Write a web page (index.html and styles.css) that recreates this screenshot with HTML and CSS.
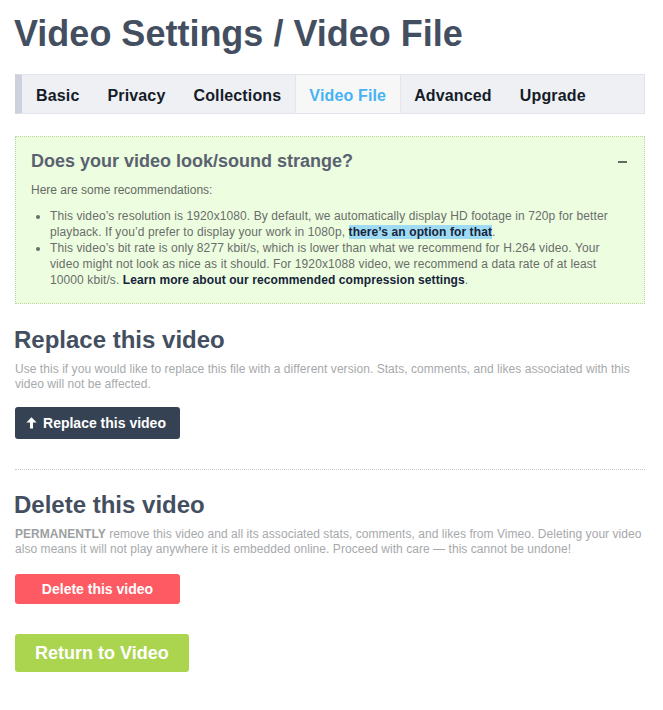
FILE: index.html
```html
<!DOCTYPE html>
<html>
<head>
<meta charset="utf-8">
<link rel="stylesheet" href="styles.css">
</head>
<body>
<div class="page">
  <h1 class="title">Video Settings / Video File</h1>
  <nav class="tabs">
    <a class="tab">Basic</a>
    <a class="tab">Privacy</a>
    <a class="tab">Collections</a>
    <a class="tab active">Video File</a>
    <a class="tab">Advanced</a>
    <a class="tab">Upgrade</a>
  </nav>

  <section class="notice">
    <div class="notice-head">
      <h2 class="notice-title">Does your video look/sound strange?</h2>
      <span class="collapse"></span>
    </div>
    <p class="notice-intro">Here are some recommendations:</p>
    <ul class="notice-list">
      <li>This video’s resolution is 1920x1080. By default, we automatically display HD footage in 720p for better playback. If you’d prefer to display your work in 1080p, <a class="strong-link hl">there’s an option for that</a>.</li>
      <li>This video’s bit rate is only 8277 kbit/s, which is lower than what we recommend for H.264 video. Your video might not look as nice as it should. For 1920x1088 video, we recommend a data rate of at least 10000 kbit/s. <a class="strong-link">Learn more about our recommended compression settings</a>.</li>
    </ul>
  </section>

  <section class="block">
    <h2 class="block-title">Replace this video</h2>
    <p class="block-desc">Use this if you would like to replace this file with a different version. Stats, comments, and likes associated with this video will not be affected.</p>
    <button class="btn btn-dark"><svg class="arrow" width="11" height="12" viewBox="0 0 11 12"><path d="M5.5 0.3 L10.6 5.6 L7 5.6 L7 11.6 L4 11.6 L4 5.6 L0.4 5.6 Z" fill="#fff"/></svg>Replace this video</button>
  </section>

  <hr class="divider">

  <section class="block">
    <h2 class="block-title">Delete this video</h2>
    <p class="block-desc"><b>PERMANENTLY</b> remove this video and all its associated stats, comments, and likes from Vimeo. Deleting your video also means it will not play anywhere it is embedded online. Proceed with care — this cannot be undone!</p>
    <button class="btn btn-red">Delete this video</button>
  </section>

  <button class="btn btn-green">Return to Video</button>
</div>
</body>
</html>
```

FILE: styles.css
```css
* { box-sizing: border-box; }
html, body { margin: 0; padding: 0; background: #fff; }
body {
  font-family: "Liberation Sans", Arial, Helvetica, sans-serif;
  color: #6b6b6b;
}
.page {
  width: 663px;
  padding: 12px 18px 0 15px;
  display: flex;
  flex-direction: column;
  align-items: flex-start;
}
.title {
  margin: 0 0 0 -1px;
  font-size: 36px;
  line-height: 44px;
  font-weight: bold;
  color: #434f60;
}
.tabs {
  margin-top: 18px;
  align-self: stretch;
  display: flex;
  height: 40px;
  background: #eef0f4;
  border: 1px solid #e1e4ea;
  border-left: 7px solid #ccd1dc;
}
.tab {
  padding: 3px 14px 0;
  font-size: 16px;
  line-height: 35px;
  font-weight: bold;
  letter-spacing: 0.15px;
  color: #151c28;
}
.tab.active {
  background: #f7f7f8;
  color: #47b3f4;
  border-left: 1px solid #e4e6ea;
  border-right: 1px solid #e4e6ea;
  padding: 3px 14px 0 13px;
  margin-right: -1px;
}
.notice {
  margin-top: 22px;
  align-self: stretch;
  background: #edfde0;
  border: 1px dotted #b9d9a4;
  padding: 13px 20px 15px 15px;
}
.notice-head {
  display: flex;
  justify-content: space-between;
  align-items: center;
}
.notice-title {
  margin: 0;
  font-size: 18px;
  line-height: 22px;
  font-weight: bold;
  color: #5a6270;
}
.collapse {
  width: 9px;
  height: 2px;
  background: #5f6d61;
  margin-right: -3px;
  margin-top: 2px;
}
.notice-intro {
  margin: 10px 0 0;
  font-size: 12px;
  line-height: 16px;
  color: #666a66;
}
.notice-list {
  margin: 10px 0 0;
  padding-left: 19px;
  font-size: 12px;
  line-height: 16px;
  letter-spacing: 0.1px;
  color: #6a6d6a;
}
.strong-link {
  font-weight: bold;
  color: #16233a;
}
.hl { background: #9fdcf4; }
.block {
  margin-top: 22px;
  display: flex;
  flex-direction: column;
  align-items: flex-start;
}
.block-title {
  margin: 0 0 0 -1px;
  font-size: 24px;
  line-height: 28px;
  font-weight: bold;
  color: #434f60;
}
.block-desc {
  margin: 8px 0 0;
  font-size: 12px;
  line-height: 15px;
  letter-spacing: 0.05px;
  color: #a6a9ac;
}
.block-desc b { color: #9c9fa2; }
.btn {
  border: none;
  font-family: "Liberation Sans", Arial, Helvetica, sans-serif;
  font-weight: bold;
  color: #fff;
  border-radius: 3px;
  display: flex;
  align-items: center;
  justify-content: center;
  padding: 0;
}
.btn-dark {
  margin-top: 15px;
  width: 165px;
  height: 32px;
  font-size: 14px;
  background: #354254;
  gap: 6px;
  padding-right: 3px;
}
.arrow { margin-top: -1px; }
.btn-red {
  margin-top: 17px;
  width: 165px;
  height: 30px;
  font-size: 14px;
  background: #fe5a63;
}
.btn-green {
  margin-top: 30px;
  height: 38px;
  padding: 0 20px;
  font-size: 18px;
  background: #abd44f;
}
.divider {
  align-self: stretch;
  margin: 30px 0 0;
  border: none;
  border-top: 1px dotted #c8c8c8;
  height: 0;
}
.divider + .block { margin-top: 21px; }
```
